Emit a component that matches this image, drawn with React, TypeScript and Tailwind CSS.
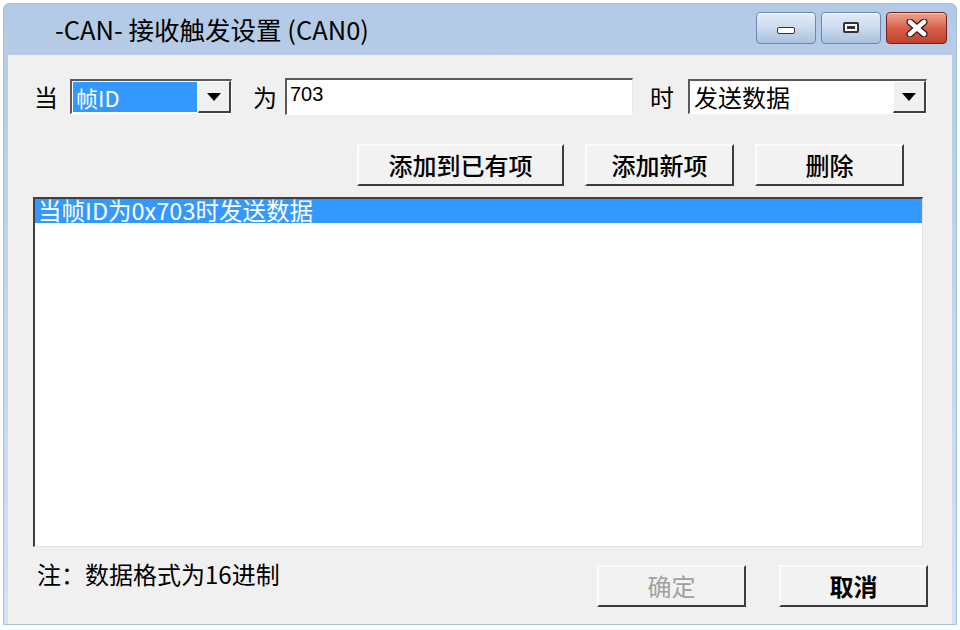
import React from "react";

const cjk = { fontFamily: '"Noto Sans CJK SC", "Noto Sans", sans-serif' };

function Arrow() {
  return (
    <svg width="14" height="8" viewBox="0 0 14 8">
      <polygon points="0,0 14,0 7,8" fill="#000" />
    </svg>
  );
}

function DropBtn() {
  return (
    <div className="w-[33px] h-full flex items-center justify-center bg-[#f0f0f0] border-t border-l border-t-[#ffffff] border-l-[#ffffff] border-r-2 border-b-2 border-r-[#404040] border-b-[#404040]">
      <Arrow />
    </div>
  );
}

function Btn({ label, w, disabled, bold }: { label: string; w: string; disabled?: boolean; bold?: boolean }) {
  return (
    <div
      className={`${w} h-[42px] flex items-center justify-center bg-[#f2f2f2] border-t-2 border-l-2 border-t-[#fcfcfc] border-l-[#fcfcfc] border-r-2 border-b-2 border-r-[#3c3c3c] border-b-[#3c3c3c] text-[24px] leading-none ${bold ? "font-semibold" : "font-medium"} ${disabled ? "text-[#a0a0a0] font-normal" : "text-black"}`}
      style={cjk}
    >
      {label}
    </div>
  );
}

export default function App() {
  return (
    <div className="w-[960px] h-[630px] bg-white pt-[3px] px-[3px] pb-[5px]">
      <div className="w-[954px] h-[622px] flex flex-col rounded-t-[6px] bg-gradient-to-b from-[#b3cae6] to-[#d3e2f3] border border-[#a9c0dc]">
        {/* Title bar */}
        <div className="h-[51px] flex items-center shrink-0">
          <div className="ml-[51px] text-[25.5px] text-black leading-none pb-[2px]" style={cjk}>
            -CAN- 接收触发设置 (CAN0)
          </div>
          <div className="ml-auto mr-[9px] flex gap-[5px] items-center mb-[4px]">
            <div className="w-[60px] h-[32px] rounded-[4px] border border-[#6b87ad] bg-gradient-to-b from-[#e4edf8] via-[#cbdaee] to-[#a9c1df] flex items-center justify-center shadow-[inset_0_1px_0_#ffffff]">
              <div className="w-[18px] h-[7px] bg-white border border-[#333] rounded-[2px] mt-[6px]" />
            </div>
            <div className="w-[60px] h-[32px] rounded-[4px] border border-[#6b87ad] bg-gradient-to-b from-[#e4edf8] via-[#cbdaee] to-[#a9c1df] flex items-center justify-center shadow-[inset_0_1px_0_#ffffff]">
              <div className="w-[16px] h-[11px] bg-white border-2 border-[#333] rounded-[2px] flex items-center justify-center">
                <div className="w-[8px] h-[3px] bg-[#333]" />
              </div>
            </div>
            <div className="w-[61px] h-[32px] rounded-[4px] border border-[#6e2418] bg-gradient-to-b from-[#eba394] via-[#d9604a] to-[#c0412a] flex items-center justify-center shadow-[inset_0_1px_0_#f7c9bf]">
              <svg width="24" height="18" viewBox="0 0 24 18">
                <path d="M5 3 L19 15 M19 3 L5 15" stroke="#3a1a14" strokeWidth="7" strokeLinecap="round" />
                <path d="M5 3 L19 15 M19 3 L5 15" stroke="#ffffff" strokeWidth="4.5" strokeLinecap="round" />
              </svg>
            </div>
          </div>
        </div>

        {/* Client area */}
        <div className="flex-1 mx-[4px] bg-[#f0f0f0] flex flex-col">
          {/* Row 1 */}
          <div className="flex items-center mt-[23px] h-[37px]">
            <div className="ml-[26px] text-[24px] leading-none text-black" style={cjk}>当</div>
            <div className="ml-[12px] w-[162px] h-[35px] flex border-t-2 border-l-2 border-t-[#5a5a5a] border-l-[#5a5a5a] border-b border-r border-b-[#ffffff] border-r-[#ffffff] bg-white">
              <div className="flex-1 p-[1px] bg-white">
                <div className="w-full h-full bg-[#3399ff] text-white text-[22px] leading-none flex items-center pl-[3px]" style={cjk}>
                  帧ID
                </div>
              </div>
              <DropBtn />
            </div>
            <div className="ml-[21px] text-[24px] leading-none text-black" style={cjk}>为</div>
            <div className="ml-[8px] w-[348px] h-[37px] bg-white border-t-2 border-l-2 border-t-[#5a5a5a] border-l-[#5a5a5a] border-b border-r border-b-[#ffffff] border-r-[#e8e8e8] pl-[3px] pt-[3px]">
              <span className="text-[20px] leading-none text-black" style={{ fontFamily: '"Liberation Sans", Arial, sans-serif' }}>703</span>
            </div>
            <div className="ml-[17px] text-[24px] leading-none text-black" style={cjk}>时</div>
            <div className="ml-[14px] w-[239px] h-[35px] flex border-t-2 border-l-2 border-t-[#5a5a5a] border-l-[#5a5a5a] border-b border-r border-b-[#ffffff] border-r-[#ffffff] bg-white">
              <div className="flex-1 flex items-center pl-[4px] text-[24px] leading-none text-black" style={cjk}>
                发送数据
              </div>
              <DropBtn />
            </div>
          </div>

          {/* Row 2 buttons */}
          <div className="flex justify-end gap-[21px] mt-[29px] pr-[48px]">
            <Btn label="添加到已有项" w="w-[207px]" />
            <Btn label="添加新项" w="w-[149px]" />
            <Btn label="删除" w="w-[149px]" />
          </div>

          {/* List box */}
          <div className="ml-[25px] mt-[11px] w-[890px] h-[350px] bg-white border-t-2 border-l-2 border-t-[#404040] border-l-[#404040] border-b border-r border-b-[#e3e3e3] border-r-[#e3e3e3]">
            <div className="h-[24px] bg-[#3399ff] text-white text-[23.5px] leading-none flex items-center pl-[3px]" style={cjk}>
              当帧ID为0x703时发送数据
            </div>
          </div>

          {/* Bottom row */}
          <div className="flex mt-[17px] pr-[24px]">
            <div className="ml-[29px] mt-[-2px] text-[24px] leading-none text-black h-fit" style={cjk}>
              注：数据格式为16进制
            </div>
            <div className="ml-auto mt-[1px] flex gap-[33px]">
              <Btn label="确定" w="w-[149px]" disabled />
              <Btn label="取消" w="w-[149px]" bold />
            </div>
          </div>
        </div>
      </div>
    </div>
  );
}
